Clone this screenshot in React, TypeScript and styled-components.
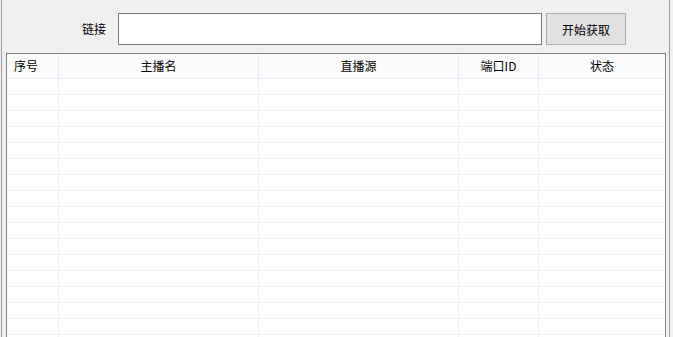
import React from "react";
import styled, { createGlobalStyle } from "styled-components";

const Global = createGlobalStyle`
  html, body { margin: 0; padding: 0; background: #f0f0f0; }
  body { font-family: "Noto Sans CJK SC", "Noto Sans", sans-serif; font-size: 12px; color: #000; }
`;

const Screen = styled.div`
  width: 673px;
  height: 337px;
  overflow: hidden;
  background: #f0f0f0;
`;

const Frame = styled.div`
  margin-left: 1px;
  width: 669px;
  height: 337px;
  border-left: 1px solid #a0a0a0;
  border-right: 1px solid #a0a0a0;
  display: flex;
  flex-direction: column;
  gap: 8px;
  padding-top: 13px;
  box-sizing: border-box;
`;

const Toolbar = styled.div`
  display: flex;
  align-items: center;
  height: 32px;
  padding-left: 80px;
`;

const Label = styled.span`
  width: 24px;
  margin-right: 12px;
  line-height: 32px;
  white-space: nowrap;
`;

const UrlInput = styled.input`
  box-sizing: border-box;
  width: 424px;
  height: 32px;
  border: 1px solid #7a7a7a;
  background: #fff;
  outline: none;
  padding: 0 4px;
  font: inherit;
  margin-right: 4px;
`;

const Button = styled.button`
  box-sizing: border-box;
  width: 80px;
  height: 32px;
  border: 1px solid #adadad;
  background: #e1e1e1;
  font: inherit;
  color: #000;
  padding: 0;
`;

const Table = styled.div`
  margin-left: 4px;
  width: 660px;
  flex: 1;
  border: 1px solid #828282;
  border-bottom: none;
  background: #fff;
  box-sizing: border-box;
  overflow: hidden;
`;

const Grid = styled.div`
  display: grid;
  grid-template-columns: 52px 200px 200px 80px 1fr;
`;

const HeadCell = styled.div<{ $left?: boolean; $last?: boolean }>`
  height: 24px;
  line-height: 24px;
  background: #fcfcfc;
  border-bottom: 1px solid #e3ecf8;
  border-right: ${(p) => (p.$last ? "none" : "1px solid #e3ecf8")};
  text-align: ${(p) => (p.$left ? "left" : "center")};
  padding-left: ${(p) => (p.$left ? "7px" : "0")};
  white-space: nowrap;
`;

const Cell = styled.div<{ $last?: boolean }>`
  height: 15px;
  border-bottom: 1px solid #f0f0f0;
  border-right: ${(p) => (p.$last ? "none" : "1px solid #f0f0f0")};
`;

const columns = ["序号", "主播名", "直播源", "端口ID", "状态"];

export default function App() {
  const rows = Array.from({ length: 17 });
  return (
    <Screen>
      <Global />
      <Frame>
        <Toolbar>
          <Label>链接</Label>
          <UrlInput />
          <Button>开始获取</Button>
        </Toolbar>
        <Table>
          <Grid>
            {columns.map((c, i) => (
              <HeadCell key={c} $left={i === 0} $last={i === columns.length - 1}>
                {c}
              </HeadCell>
            ))}
            {rows.map((_, r) =>
              columns.map((c, i) => (
                <Cell key={`${r}-${c}`} $last={i === columns.length - 1} />
              ))
            )}
          </Grid>
        </Table>
      </Frame>
    </Screen>
  );
}
